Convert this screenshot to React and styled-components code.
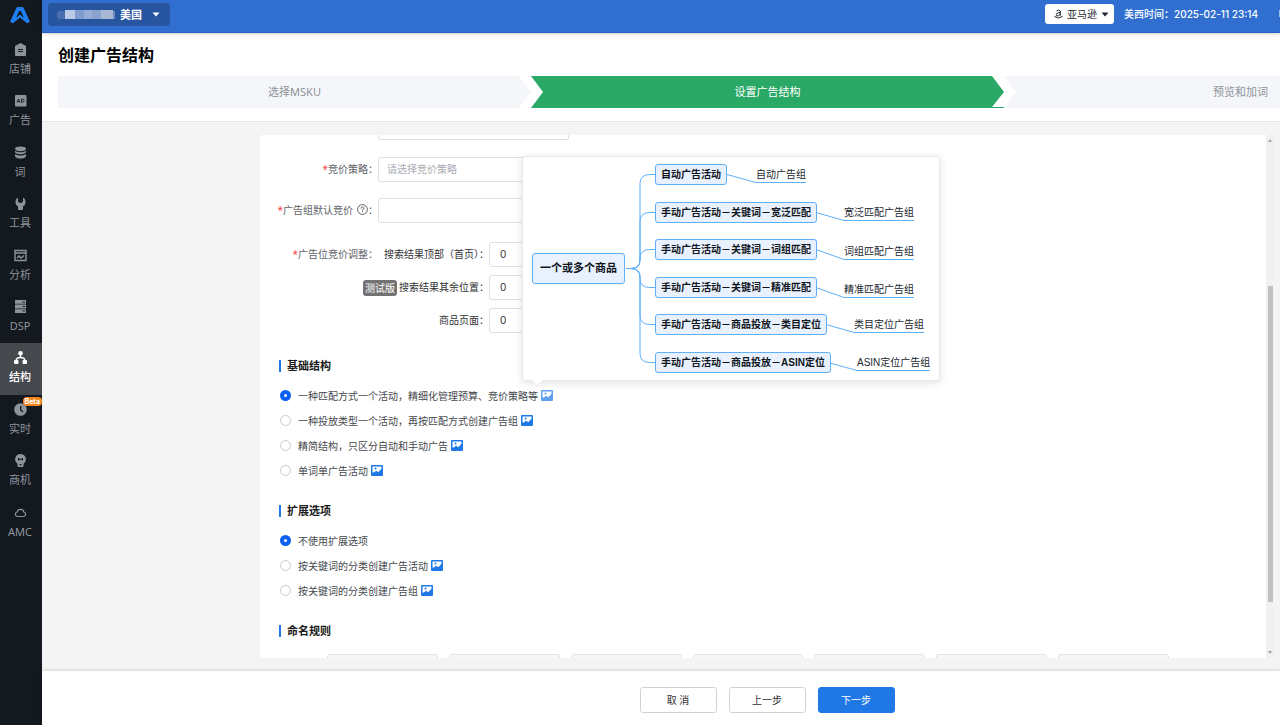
import React from 'react';
import styled, { createGlobalStyle, css } from 'styled-components';

const GlobalStyle = createGlobalStyle`
  * {
    box-sizing: border-box;
  }
  body {
    margin: 0;
    overflow: hidden;
    font-family: 'Noto Sans', 'Noto Sans CJK SC', sans-serif;
    font-size: 10px;
    color: #303133;
  }
  button, input, select {
    font-family: inherit;
    font-size: inherit;
    color: inherit;
  }
`;

const Page = styled.div`
  display: flex;
  height: 100vh;
  background: #f4f4f4;
`;

/* sidebar */

const Sidebar = styled.aside`
  flex: 0 0 42px;
  background: #14191f;
`;

const Logo = styled.a`
  display: flex;
  justify-content: center;
  height: 35px;
  padding: 7px 3px 0 0;
`;

const Nav = styled.nav`
  display: grid;
  grid-auto-rows: 1fr;
  height: 514px;
`;

const NavItem = styled.a`
  position: relative;
  display: flex;
  flex-direction: column;
  align-items: center;
  gap: 5px;
  padding: 8px 2px 0 0;
  font-size: 11px;
  line-height: 16px;
  text-decoration: none;
  color: ${(p) => (p.$active ? '#ffffff' : '#8d959c')};
  background: ${(p) => (p.$active ? '#45484d' : 'transparent')};
  font-weight: ${(p) => (p.$active ? 500 : 400)};
`;

const Beta = styled.span`
  position: absolute;
  top: 2px;
  right: 0;
  padding: 0 2px;
  border-radius: 4px;
  background: #f5871f;
  color: #fff;
  font: bold 7px/9px Inter, sans-serif;
`;

/* top bar */

const Main = styled.div`
  flex: 1;
  min-width: 0;
  display: flex;
  flex-direction: column;
`;

const TopBar = styled.header`
  position: relative;
  flex: 0 0 33px;
  display: flex;
  align-items: flex-start;
  padding-left: 6px;
  background: #306fcf;
  border-bottom: 1px solid #2560c4;
  box-shadow: 0 1px 3px rgba(0, 0, 0, 0.2);
  color: #fff;
`;

const ShopButton = styled.button`
  display: flex;
  align-items: center;
  height: 23px;
  margin-top: 3px;
  padding: 0 10px 0 9px;
  border: 0;
  border-radius: 4px;
  background: #27559f;
  color: #fff;
  font-size: 11px;
  font-weight: 700;
  span {
    margin: 0 10px 0 4px;
    padding-bottom: 1px;
  }
`;

const PlatformButton = styled.button`
  display: flex;
  align-items: center;
  gap: 4px;
  height: 20px;
  margin: 4px 10px 0 auto;
  padding: 0 5px 0 9px;
  border: 0;
  border-radius: 3px;
  background: #fff;
  color: #1f2733;
  span {
    padding-bottom: 2px;
  }
`;

const Clock = styled.span`
  margin-right: 21px;
  font-family: Inter, 'Noto Sans CJK SC', sans-serif;
  font-weight: 500;
  line-height: 28px;
`;

const Divider = styled.i`
  width: 1px;
  height: 7px;
  margin-top: 10px;
  background: #9dbbe9;
`;

/* heading and steps */

const Heading = styled.section`
  padding: 10px 0 13px 16px;
  border-bottom: 1px solid #e6e6e6;
  background: #fff;
  h1 {
    margin: 0 0 9px;
    font-size: 16px;
    line-height: 24px;
    color: #000;
  }
`;

const Steps = styled.ol`
  display: flex;
  margin: 0;
  padding: 0;
  list-style: none;
  overflow: hidden;
`;

const Step = styled.li`
  flex: 1 0 473px;
  font-size: 11px;
  line-height: 32px;
  text-align: center;
  background: ${(p) => (p.$active ? '#29a866' : '#f4f6fa')};
  color: ${(p) => (p.$active ? '#ffffff' : '#8f9399')};
  clip-path: ${(p) =>
    p.$active
      ? 'polygon(0 0, calc(100% - 12px) 0, 100% 50%, calc(100% - 12px) calc(100% - 1px), 100% calc(100% - 1px), 100% 100%, 0 100%, 12px 50%)'
      : 'polygon(0 0, calc(100% - 12px) 0, 100% 50%, calc(100% - 12px) 100%, 0 100%, 12px 50%)'};
  &:first-child {
    border-radius: 3px 0 0 3px;
    clip-path: polygon(0 0, calc(100% - 12px) 0, 100% 50%, calc(100% - 12px) 100%, 0 100%);
  }
`;

/* form panel */

const Body = styled.div`
  flex: 1;
  min-height: 0;
  display: flex;
  margin: 13px 6px 13px 218px;
`;

const Panel = styled.form`
  flex: 1;
  min-width: 0;
  overflow: hidden;
  padding: 0 19px;
  border-radius: 3px 0 0 3px;
  background: #fff;
`;

const Scrollbar = styled.div`
  flex: 0 0 8px;
  display: flex;
  flex-direction: column;
  align-items: center;
  padding: 4px 0;
  background: #f1f1f1;
`;

const Space = styled.i`
  flex: ${(p) => p.$grow};
`;

const Thumb = styled.i`
  flex: 316;
  width: 5px;
  background: #c1c1c1;
`;

const FieldRow = styled.div`
  display: flex;
  align-items: ${(p) => (p.$top ? 'flex-start' : 'center')};
  margin-top: ${(p) => p.$gap || 16}px;
`;

const Label = styled.label`
  flex: 0 0 ${(p) => p.$width || 99}px;
  min-width: 0;
  display: flex;
  justify-content: flex-end;
  align-items: center;
  line-height: 25px;
  white-space: nowrap;
  color: ${(p) => (p.$dark ? '#303133' : '#606266')};
  svg {
    flex: none;
    margin: 0 0 2px 4px;
  }
  em {
    font-style: normal;
    color: #f04848;
  }
`;

const fieldBox = css`
  height: 25px;
  border: 1px solid #dcdfe6;
  border-radius: 3px;
  background: #fff;
`;

const CutField = styled.div`
  width: 191px;
  height: 5px;
  margin-left: 99px;
  border: 1px solid #dcdfe6;
  border-top: 0;
  border-radius: 0 0 3px 3px;
`;

const Select = styled.select`
  ${fieldBox}
  width: 191px;
  padding: 0 8px 2px;
  appearance: none;
  color: #a8abb2;
`;

const Input = styled.input`
  ${fieldBox}
  width: ${(p) => p.$width || 191}px;
  padding: 0 10px 2px;
`;

const Placements = styled.div`
  display: flex;
  flex-direction: column;
  gap: 8px;
  > div {
    display: flex;
  }
  input {
    font-family: Inter, sans-serif;
  }
`;

const Tag = styled.span`
  flex: none;
  margin-right: 2px;
  padding: 0 2px;
  border-radius: 3px;
  background: #737373;
  color: #fff;
  line-height: 16px;
`;

const SectionTitle = styled.h2`
  display: flex;
  align-items: center;
  gap: 6px;
  margin: ${(p) => p.$top || 20}px 0 0;
  font-size: 11px;
  line-height: 16px;
  color: #1a1a1a;
  &::before {
    content: '';
    width: 2px;
    height: 12px;
    background: #1f78e6;
  }
`;

const RadioList = styled.div`
  margin-top: 9px;
`;

const RadioRow = styled.div`
  display: flex;
  align-items: center;
  gap: 3px;
  height: 25px;
  padding-left: 1px;
  label {
    display: flex;
    align-items: center;
    gap: 7px;
    color: #45484d;
  }
  input {
    appearance: none;
    width: 11px;
    height: 11px;
    margin: 0;
    border: 1px solid #c8ccd4;
    border-radius: 50%;
    background: #fff;
  }
  input:checked {
    border: 4px solid #0a5ff2;
  }
`;

const Preview = styled.button`
  position: relative;
  display: flex;
  padding: 0;
  border: 0;
  background: none;
  text-align: left;
  > svg {
    opacity: ${(p) => (p.$open ? 0.7 : 1)};
  }
`;

const NameBoxes = styled.div`
  display: flex;
  gap: 11px;
  margin: 15px 78px 0 48px;
  input {
    flex: 1;
    min-width: 0;
    height: 25px;
    border: 1px solid #e0e3e8;
    border-radius: 3px;
    background: #f5f7fa;
  }
`;

/* structure diagram popover */

const Popover = styled.div`
  position: absolute;
  left: -19px;
  bottom: 20px;
  width: 418px;
  height: 225px;
  border: 1px solid #e8e8e8;
  border-radius: 3px;
  background: #fff;
  box-shadow: 0 2px 8px rgba(0, 0, 0, 0.12);
  font-family: 'Liberation Sans', 'Noto Sans CJK SC', sans-serif;
  &::after {
    content: '';
    position: absolute;
    left: 10px;
    bottom: -5px;
    width: 8px;
    height: 8px;
    background: #fff;
    border: solid #e8e8e8;
    border-width: 0 1px 1px 0;
    transform: rotate(45deg);
  }
`;

const Wires = styled.svg`
  position: absolute;
  left: 0;
  top: 0;
  fill: none;
  stroke: #5fb0fb;
`;

const Node = styled.span`
  position: absolute;
  left: ${(p) => p.$x}px;
  top: ${(p) => p.$y}px;
  height: ${(p) => (p.$root ? 31 : 21)}px;
  padding: 0 ${(p) => (p.$root ? 7 : 5)}px;
  border: 1px solid #5fb0fb;
  border-radius: 3px;
  background: #e9f1fe;
  color: #10151c;
  font-size: ${(p) => (p.$root ? 11 : 10)}px;
  font-weight: 700;
  line-height: ${(p) => (p.$root ? 29 : 19)}px;
  white-space: nowrap;
`;

const Leaf = styled.span`
  position: absolute;
  left: ${(p) => p.$x}px;
  top: ${(p) => p.$y}px;
  height: 16px;
  border-bottom: 1px solid #5fb0fb;
  line-height: 16px;
  white-space: nowrap;
  color: #22272e;
`;

/* footer */

const Footer = styled.footer`
  position: relative;
  display: flex;
  justify-content: center;
  gap: 12px;
  padding: 16px 6px 12px 218px;
  background: #fff;
  box-shadow: 0 -1px 3px rgba(0, 0, 0, 0.12);
`;

const Button = styled.button`
  width: 77px;
  height: 26px;
  padding: 0 0 2px;
  border: 1px solid ${(p) => (p.$primary ? '#1f78e6' : '#d0d2d6')};
  border-radius: 3px;
  background: ${(p) => (p.$primary ? '#1f78e6' : '#ffffff')};
  color: ${(p) => (p.$primary ? '#ffffff' : '#303133')};
`;

const shapes = {
  shop: (
    <path fillRule="evenodd" d="M6.5 0L12 3v9a1 1 0 0 1-1 1H2a1 1 0 0 1-1-1V3zM4 6v1h5V6zM4 8v1h5V8z" />
  ),
  ad: (
    <>
      <rect x="1" y="1" width="11.500" height="11.500" rx="1" />
      <path
        d="M3 8.500L4.500 5L6 8.500M3.500 7.500h2M7.500 5v3.300h.8q1.700 0 1.700-1.650T8.300 5z"
        fill="none"
        stroke="#14191f"
        strokeWidth=".9"
      />
    </>
  ),
  word: (
    <>
      <ellipse cx="6.500" cy="2.800" rx="5.500" ry="2.400" />
      <path d="M1 4.500c1 2.400 10 2.400 11 0v1.800c-1 2.600-10 2.600-11 0zM1 7.800c1 2.400 10 2.400 11 0v2.400c-1 3.200-10 3.200-11 0z" />
    </>
  ),
  tool: <path d="M4 .5A5 5 0 0 0 4 9.300V12a1 1 0 0 0 1 1h3a1 1 0 0 0 1-1V9.300A5 5 0 0 0 9 .5v4L7.800 5.800H5.200L4 4.500z" />,
  chart: (
    <path
      d="M1 1.500h11v10H1zM1 4h11M3 9l2-2 2 2 3-2.500"
      fill="none"
      stroke="currentColor"
      strokeWidth="1.400"
    />
  ),
  server: (
    <path fillRule="evenodd" d="M1 0h11v3.800H1zM1 4.600h11v3.800H1zM1 9.200h11V13H1zM8.500 1.500v1H11v-1zM8.500 6v1H11V6zM8.500 10.600v1H11v-1z" />
  ),
  tree: (
    <>
      <circle cx="6.500" cy="2.300" r="2.300" />
      <rect x="0" y="9" width="4.500" height="4" rx="1" />
      <rect x="8.500" y="9" width="4.500" height="4" rx="1" />
      <path d="M6.500 4v2.500M2.200 9.500c0-2 1.300-3 4.300-3s4.300 1 4.300 3" fill="none" stroke="currentColor" strokeWidth="1.500" />
    </>
  ),
  clock: (
    <>
      <circle cx="6.500" cy="6.500" r="6.300" />
      <path d="M6.700 3v4l2.300 2" fill="none" stroke="#14191f" strokeWidth="1.300" />
    </>
  ),
  bulb: (
    <path
      fillRule="evenodd"
      d="M6.500 0a5.300 5.300 0 0 1 3 9.700V12a1 1 0 0 1-1 1h-4a1 1 0 0 1-1-1V9.700A5.300 5.300 0 0 1 6.500 0zM4 4v2.500h1.200V5.800h2.600v.7H9V4H7.800v.8H5.200V4zM5.500 10v1.300h2V10z"
    />
  ),
  cloud: (
    <path
      d="M3.300 10.500a2.300 2.300 0 0 1-.2-4.500 3.500 3.500 0 0 1 6.800 0 2.300 2.300 0 0 1-.2 4.500z"
      fill="none"
      stroke="currentColor"
      strokeWidth="1.200"
    />
  ),
};

const navItems = [
  ['shop', '店铺'],
  ['ad', '广告'],
  ['word', '词'],
  ['tool', '工具'],
  ['chart', '分析'],
  ['server', 'DSP'],
  ['tree', '结构'],
  ['clock', '实时'],
  ['bulb', '商机'],
  ['cloud', 'AMC'],
];

const branches = [
  { y: 7, text: '自动广告活动', end: 204, leaf: '自动广告组', x: 233, line: 25 },
  { y: 45, text: '手动广告活动－关键词－宽泛匹配', end: 293, leaf: '宽泛匹配广告组', x: 321, line: 63 },
  { y: 82, text: '手动广告活动－关键词－词组匹配', end: 293, leaf: '词组匹配广告组', x: 321, line: 102 },
  { y: 120, text: '手动广告活动－关键词－精准匹配', end: 293, leaf: '精准匹配广告组', x: 321, line: 140 },
  { y: 157, text: '手动广告活动－商品投放－类目定位', end: 303, leaf: '类目定位广告组', x: 331, line: 175 },
  { y: 195, text: '手动广告活动－商品投放－ASIN定位', end: 305, leaf: 'ASIN定位广告组', x: 334, line: 213 },
];

const structures = [
  { text: '一种匹配方式一个活动，精细化管理预算、竞价策略等', image: true, open: true },
  { text: '一种投放类型一个活动，再按匹配方式创建广告组', image: true },
  { text: '精简结构，只区分自动和手动广告', image: true },
  { text: '单词单广告活动', image: true },
];

const extensions = [
  { text: '不使用扩展选项' },
  { text: '按关键词的分类创建广告活动', image: true },
  { text: '按关键词的分类创建广告组', image: true },
];

const Caret = () => (
  <svg width="8" height="5" viewBox="0 0 8 5" fill="currentColor">
    <path d="M.500 .500h7L4 4.500z" />
  </svg>
);

const PictureIcon = () => (
  <svg width="12" height="11" viewBox="0 0 12 11">
    <rect width="12" height="11" rx="1" fill="#1f78e6" />
    <path d="M1.500 1.500h9v2.300L7.200 7.200 5.200 5.800 2.800 7.500H1.500z" fill="#fff" />
    <circle cx="4.500" cy="3.600" r="1" fill="#1f78e6" />
  </svg>
);

function StructureDiagram() {
  return (
    <Popover>
      <Wires width="416" height="223">
        {branches.map(({ y, end, x, line }) => {
          const mid = y + 10.5;
          const side = mid < 111 ? 1 : -1;
          return (
            <path
              key={y}
              d={`M103 111.500h5q9 0 9 ${-9 * side}V${mid + 9 * side}q0 ${-9 * side} 10 ${-9 * side}h5M${end} ${mid}L${x} ${line + 0.5}`}
            />
          );
        })}
      </Wires>
      <Node $root $x={9} $y={96}>一个或多个商品</Node>
      {branches.map((b) => (
        <React.Fragment key={b.y}>
          <Node $x={132} $y={b.y}>{b.text}</Node>
          <Leaf $x={b.x} $y={b.line - 15}>{b.leaf}</Leaf>
        </React.Fragment>
      ))}
    </Popover>
  );
}

function RadioGroup({ name, options }) {
  return (
    <RadioList>
      {options.map((option, i) => (
        <RadioRow key={option.text}>
          <label>
            <input type="radio" name={name} defaultChecked={i === 0} />
            {option.text}
          </label>
          {option.image && (
            <Preview type="button" $open={option.open}>
              <PictureIcon />
              {option.open && <StructureDiagram />}
            </Preview>
          )}
        </RadioRow>
      ))}
    </RadioList>
  );
}

export default function App() {
  return (
    <Page>
      <GlobalStyle />
      <Sidebar>
        <Logo href="#">
          <svg width="20" height="17" viewBox="0 0 20 17" fill="none" strokeLinecap="round" strokeLinejoin="round">
            <path d="M2.500 14L8 2h4l5.500 12" stroke="#1f7ff0" strokeWidth="4" />
            <path d="M3 14.500L10 9l7 5.500" stroke="#1f7ff0" strokeWidth="2.400" />
            <path d="M7.500 9.500L10 4.500l2.500 5" stroke="#14191f" strokeWidth="1" />
          </svg>
        </Logo>
        <Nav>
          {navItems.map(([icon, text]) => (
            <NavItem href="#" key={text} $active={icon === 'tree'}>
              <svg width="13" height="13" viewBox="0 0 13 13" fill="currentColor">
                {shapes[icon]}
              </svg>
              {text}
              {icon === 'clock' && <Beta>Beta</Beta>}
            </NavItem>
          ))}
        </Nav>
      </Sidebar>
      <Main>
        <TopBar>
          <ShopButton type="button">
            <svg width="59" height="11" viewBox="0 0 59 11">
              <path d="M0 4h1v4H0zM1 2h7v8H1z" fill="#4a70b0" />
              <path d="M8 1h10v9H8z" fill="#b9c9e7" />
              <path d="M18 1h9v9h-9z" fill="#7f9dd1" />
              <path d="M27 1h8v9h-8z" fill="#97add8" />
              <path d="M35 1h9v9h-9z" fill="#89a2d0" />
              <path d="M44 1h12v9H44z" fill="#a8b7d4" />
              <path d="M56 2h2v8h-2z" fill="#6d8cc2" />
            </svg>
            <span>美国</span>
            <Caret />
          </ShopButton>
          <PlatformButton type="button">
            <svg width="9" height="10" viewBox="0 0 9 10" fill="none" stroke="currentColor">
              <path d="M2.500 2q2-2 3.800 0v3.500q0 1 .8 1.300M6.300 3.500q-4 0-4 2t2 1.300q2-.6 2-2.300M.5 7.500q4 3 8 0" />
            </svg>
            <span>亚马逊</span>
            <Caret />
          </PlatformButton>
          <Clock>美西时间：2025-02-11 23:14</Clock>
          <Divider />
        </TopBar>
        <Heading>
          <h1>创建广告结构</h1>
          <Steps>
            <Step>选择MSKU</Step>
            <Step $active>设置广告结构</Step>
            <Step>预览和加词</Step>
          </Steps>
        </Heading>
        <Body>
          <Panel>
            <CutField />
            <FieldRow $gap={17}>
              <Label htmlFor="strategy"><em>*</em>竞价策略：</Label>
              <Select id="strategy">
                <option>请选择竞价策略</option>
              </Select>
            </FieldRow>
            <FieldRow>
              <Label htmlFor="bid">
                <em>*</em>广告组默认竞价
                <svg width="11" height="11" viewBox="0 0 11 11" fill="none" stroke="currentColor">
                  <circle cx="5.500" cy="5.500" r="4.900" />
                  <path d="M4 4.500q0-1.500 1.500-1.500T7 4.300q0 .8-1.500 1.400v.8M5.500 7.300v1" />
                </svg>
                ：
              </Label>
              <Input id="bid" />
            </FieldRow>
            <FieldRow $top $gap={19}>
              <Label as="div"><em>*</em>广告位竞价调整：</Label>
              <Placements>
                <div>
                  <Label $dark $width={111} htmlFor="top">搜索结果顶部（首页）：</Label>
                  <Input id="top" $width={80} defaultValue="0" />
                </div>
                <div>
                  <Label $dark $width={111} htmlFor="rest"><Tag>测试版</Tag>搜索结果其余位置：</Label>
                  <Input id="rest" $width={80} defaultValue="0" />
                </div>
                <div>
                  <Label $dark $width={111} htmlFor="product">商品页面：</Label>
                  <Input id="product" $width={80} defaultValue="0" />
                </div>
              </Placements>
            </FieldRow>
            <SectionTitle $top={25}>基础结构</SectionTitle>
            <RadioGroup name="structure" options={structures} />
            <SectionTitle>扩展选项</SectionTitle>
            <RadioGroup name="extension" options={extensions} />
            <SectionTitle>命名规则</SectionTitle>
            <NameBoxes>
              {[1, 2, 3, 4, 5, 6, 7].map((n) => (
                <input key={n} aria-label={`命名规则 ${n}`} disabled />
              ))}
            </NameBoxes>
          </Panel>
          <Scrollbar>
            <svg width="4" height="3" fill="#a3a3a3"><path d="M0 3L2 0l2 3z" /></svg>
            <Space $grow={144} />
            <Thumb />
            <Space $grow={49} />
            <svg width="4" height="3" fill="#a3a3a3"><path d="M0 0h4L2 3z" /></svg>
          </Scrollbar>
        </Body>
        <Footer>
          <Button type="button">取 消</Button>
          <Button type="button">上一步</Button>
          <Button type="button" $primary>下一步</Button>
        </Footer>
      </Main>
    </Page>
  );
}
